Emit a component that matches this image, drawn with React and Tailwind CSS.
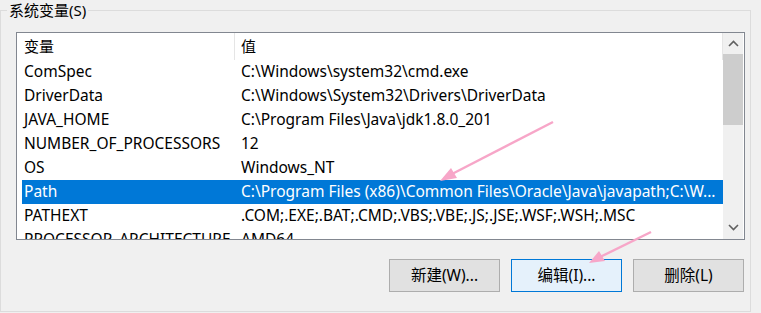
import React from "react";

const rows = [
  ["ComSpec", "C:\\Windows\\system32\\cmd.exe"],
  ["DriverData", "C:\\Windows\\System32\\Drivers\\DriverData"],
  ["JAVA_HOME", "C:\\Program Files\\Java\\jdk1.8.0_201"],
  ["NUMBER_OF_PROCESSORS", "12"],
  ["OS", "Windows_NT"],
  ["Path", "C:\\Program Files (x86)\\Common Files\\Oracle\\Java\\javapath;C:\\W..."],
  ["PATHEXT", ".COM;.EXE;.BAT;.CMD;.VBS;.VBE;.JS;.JSE;.WSF;.WSH;.MSC"],
  ["PROCESSOR_ARCHITECTURE", "AMD64"],
];

const font = { fontFamily: '"Noto Sans", "Noto Sans CJK SC", sans-serif' };

export default function App() {
  return (
    <div
      className="relative w-[761px] h-[313px] bg-[#f0f0f0] overflow-hidden text-[15.5px] text-black"
      style={font}
    >
      <div className="pt-[10px]">
        <div className="relative w-[751px] h-[302px] border border-[#dcdcdc] pl-[15px] pt-[21px]">
          <div className="absolute left-[6px] top-[-11px] px-[2px] bg-[#f0f0f0] leading-[20px] text-[15px]">
            系统变量(S)
          </div>
          {/* list box */}
          <div className="w-[729px] h-[208px] border border-[#828790] bg-white flex">
            <div className="flex-1 flex flex-col overflow-hidden">
              <div className="h-[27px] flex shrink-0 text-[15px]">
                <div className="w-[218px] pl-[7px] flex items-center border-r border-[#e5e5e5]">变量</div>
                <div className="flex-1 pl-[6px] flex items-center border-r border-[#e5e5e5]">值</div>
              </div>
              {rows.map(([k, v]) => (
                <div
                  key={k}
                  className={
                    "h-[24px] shrink-0 flex items-center ml-[5px] whitespace-nowrap " +
                    (k === "Path" ? "bg-[#0078d7] text-white" : "")
                  }
                >
                  <div className="w-[213px] pl-[2px] overflow-hidden">{k}</div>
                  <div className="flex-1 pl-[6px] overflow-hidden">{v}</div>
                </div>
              ))}
            </div>
            {/* scrollbar */}
            <div className="w-[20px] bg-[#f0f0f0] flex flex-col items-center mr-[1px]">
              <div className="h-[21px] w-full flex items-center justify-center">
                <svg width="11" height="7" viewBox="0 0 11 7">
                  <path d="M1 6 L5.5 1.5 L10 6" fill="none" stroke="#606060" strokeWidth="1.6" />
                </svg>
              </div>
              <div className="w-[20px] h-[71px] bg-[#cdcdcd]" />
              <div className="flex-1" />
              <div className="h-[21px] w-full flex items-center justify-center mb-[1px]">
                <svg width="11" height="7" viewBox="0 0 11 7">
                  <path d="M1 1 L5.5 5.5 L10 1" fill="none" stroke="#606060" strokeWidth="1.6" />
                </svg>
              </div>
            </div>
          </div>
          {/* buttons */}
          <div className="flex justify-end gap-[11px] mt-[19px] pr-[6px] text-[15.5px]">
            <button className="w-[111px] h-[33px] bg-[#e1e1e1] border border-[#adadad] flex items-center justify-center">
              新建(W)...
            </button>
            <button className="w-[111px] h-[33px] bg-[#e5f1fb] border border-[#0078d7] flex items-center justify-center">
              编辑(I)...
            </button>
            <button className="w-[111px] h-[33px] bg-[#e1e1e1] border border-[#adadad] flex items-center justify-center">
              删除(L)
            </button>
          </div>
        </div>
      </div>
      {/* pink annotation arrows */}
      <svg className="absolute left-0 top-0 pointer-events-none" width="761" height="313">
        <line x1="553" y1="122" x2="452" y2="174" stroke="#f7a6c8" strokeWidth="2.5" />
        <polygon points="440,181 451,168 457,178" fill="#f7a6c8" />
        <line x1="651" y1="232" x2="600" y2="257" stroke="#f7a6c8" strokeWidth="2.5" />
        <polygon points="589,263 599,251 605,261" fill="#f7a6c8" />
      </svg>
    </div>
  );
}
